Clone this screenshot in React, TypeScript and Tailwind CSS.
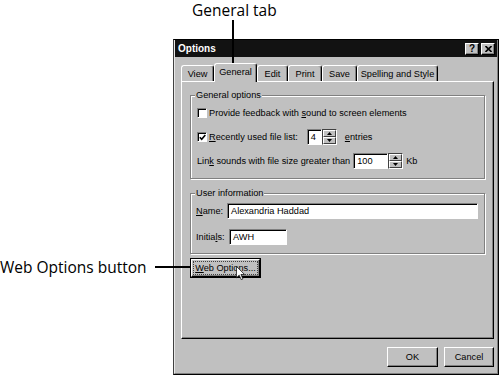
import React from "react";

const raised =
  "border border-t-white border-l-white border-r-black border-b-black shadow-[inset_-1px_-1px_0_#808080]";
const sunken =
  "border border-t-[#808080] border-l-[#808080] border-r-white border-b-white shadow-[inset_1px_1px_0_#000]";

function Check({ checked }: { checked?: boolean }) {
  return (
    <div className={`w-[10px] h-[10px] bg-white shrink-0 flex items-center justify-center ${sunken}`}>
      {checked && (
        <svg width="7" height="7" viewBox="0 0 7 7">
          <path d="M0.8 3.2 L2.7 5.2 L6.3 1" stroke="#000" strokeWidth="1.6" fill="none" />
        </svg>
      )}
    </div>
  );
}

function Spin() {
  const btn =
    "flex-1 flex items-center justify-center border border-t-white border-l-white border-r-[#404040] border-b-[#404040]";
  return (
    <div className="w-[15px] h-[16px] shrink-0 flex flex-col border border-t-[#404040] border-l-[#404040] border-r-white border-b-white bg-[#c0c0c0]">
      <div className={btn}>
        <svg width="5" height="3" viewBox="0 0 5 3">
          <path d="M2.5 0 L5 3 L0 3 Z" fill="#000" />
        </svg>
      </div>
      <div className={btn}>
        <svg width="5" height="3" viewBox="0 0 5 3">
          <path d="M0 0 L5 0 L2.5 3 Z" fill="#000" />
        </svg>
      </div>
    </div>
  );
}

function U({ children }: { children: React.ReactNode }) {
  return <span className="underline underline-offset-[1px]">{children}</span>;
}

const tabs = [
  { label: "View", w: 33 },
  { label: "General", w: 43, sel: true },
  { label: "Edit", w: 31 },
  { label: "Print", w: 34 },
  { label: "Save", w: 35 },
  { label: "Spelling and Style", w: 81 },
];

export default function App() {
  return (
    <div className="relative w-[500px] h-[375px] overflow-hidden bg-white flex flex-col text-black">
      <div className="h-[39px] shrink-0 pl-[192px] font-['Open_Sans',sans-serif] text-[15.5px] leading-[20px]">
        General tab
      </div>
      <div className="flex flex-1 min-h-0">
        <div className="w-[173px] shrink-0 pt-[218px] font-['Open_Sans',sans-serif] text-[15.5px] leading-[20px] whitespace-nowrap">
          Web Options button
        </div>
        <div className="w-[326px] h-full shrink-0 bg-[#c0c0c0] border border-black border-l-[#404040] flex flex-col font-['Liberation_Sans',sans-serif] text-[9.2px] leading-[12px]">
          <div className="flex-1 flex flex-col border-l border-r border-b border-l-[#e8e8e8] border-r-[#808080] border-b-[#808080]">
            {/* Title bar */}
            <div className="h-[17px] shrink-0 bg-[#121212] flex items-center pl-[3px] pr-[2px]">
              <span className="text-white font-bold text-[10px] leading-[12px]">Options</span>
              <div className="ml-auto flex gap-[2px]">
                <div className={`w-[14px] h-[12px] bg-[#c0c0c0] flex items-center justify-center font-bold text-[10px] leading-[10px] ${raised}`}>
                  ?
                </div>
                <div className={`w-[14px] h-[12px] bg-[#c0c0c0] flex items-center justify-center ${raised}`}>
                  <svg width="7" height="6" viewBox="0 0 7 6">
                    <path d="M0.5 0 L6.5 6 M6.5 0 L0.5 6" stroke="#000" strokeWidth="1.6" />
                  </svg>
                </div>
              </div>
            </div>

            <div className="flex-1 flex flex-col pl-[6px] pr-[3px] pt-[6px]">
              {/* Tabs */}
              <div className="h-[18px] shrink-0 flex items-end">
                {tabs.map((t) =>
                  t.sel ? (
                    <div
                      key={t.label}
                      style={{ width: t.w }}
                      className="relative z-10 h-[19px] -mb-[1px] bg-[#c0c0c0] border-t border-l border-r border-t-white border-l-white border-r-black rounded-t-[3px] shadow-[inset_-1px_0_0_#808080] flex justify-center pt-[2px] whitespace-nowrap"
                    >
                      {t.label}
                    </div>
                  ) : (
                    <div
                      key={t.label}
                      style={{ width: t.w }}
                      className="h-[16px] border-t border-l border-r border-t-white border-l-white border-r-black rounded-t-[3px] shadow-[inset_-1px_0_0_#808080] flex justify-center pt-[2px] whitespace-nowrap"
                    >
                      {t.label}
                    </div>
                  )
                )}
              </div>

              {/* Panel */}
              <div className="h-[258px] shrink-0 border border-t-white border-l-white border-r-black border-b-black shadow-[inset_-1px_-1px_0_#808080] px-[8px] flex flex-col">
                {/* General options */}
                <div className="relative mt-[13px] border border-[#808080] shadow-[inset_1px_1px_0_#fff,1px_1px_0_#fff] pl-[6px] pr-[6px] pt-[10px] pb-[9px] flex flex-col">
                  <span className="absolute -top-[7px] left-[4px] px-[1px] bg-[#c0c0c0] leading-[12px]">General options</span>
                  <div className="h-[14px] flex items-center gap-[2px]">
                    <Check />
                    <span>
                      Provide feedback with <U>s</U>ound to screen elements
                    </span>
                  </div>
                  <div className="h-[16px] mt-[9px] flex items-center">
                    <Check checked />
                    <span className="ml-[2px]">
                      <U>R</U>ecently used file list:
                    </span>
                    <div className={`ml-[9px] w-[15px] h-[16px] bg-white flex items-center pl-[3px] ${sunken}`}>4</div>
                    <Spin />
                    <span className="ml-[8px]">
                      <U>e</U>ntries
                    </span>
                  </div>
                  <div className="h-[16px] mt-[8px] flex items-center">
                    <span>
                      Lin<U>k</U> sounds with file size greater than
                    </span>
                    <div className={`ml-[3px] w-[35px] h-[16px] bg-white flex items-center pl-[3px] ${sunken}`}>100</div>
                    <Spin />
                    <span className="ml-[3px]">Kb</span>
                  </div>
                </div>

                {/* User information */}
                <div className="relative mt-[14px] border border-[#808080] shadow-[inset_1px_1px_0_#fff,1px_1px_0_#fff] pl-[5px] pr-[6px] pt-[9px] pb-[8px] flex flex-col">
                  <span className="absolute -top-[7px] left-[4px] px-[1px] bg-[#c0c0c0] leading-[12px]">User information</span>
                  <div className="h-[16px] flex items-center">
                    <span className="w-[31px] shrink-0">
                      <U>N</U>ame:
                    </span>
                    <div className={`flex-1 h-[16px] bg-white flex items-center pl-[3px] ${sunken}`}>Alexandria Haddad</div>
                  </div>
                  <div className="h-[16px] mt-[10px] flex items-center">
                    <span className="w-[33px] shrink-0">
                      Initia<U>l</U>s:
                    </span>
                    <div className={`w-[58px] h-[16px] bg-white flex items-center pl-[3px] ${sunken}`}>AWH</div>
                  </div>
                </div>

                {/* Web options button */}
                <div className="mt-[4px] w-[71px] h-[20px] border border-black">
                  <div className={`w-full h-full flex items-center justify-center ${raised}`}>
                    <span className="outline outline-1 outline-dotted outline-[#404040] px-[1px]">
                      <U>W</U>eb Options...
                    </span>
                  </div>
                </div>
              </div>

              {/* Bottom buttons */}
              <div className="mt-[8px] flex justify-end gap-[6px]">
                <div className={`w-[51px] h-[20px] flex items-center justify-center ${raised}`}>OK</div>
                <div className={`w-[50px] h-[20px] flex items-center justify-center ${raised}`}>Cancel</div>
              </div>
            </div>
          </div>
        </div>
      </div>

      {/* Leader lines */}
      <div className="absolute left-[232px] top-[20px] w-[2px] h-[55px] bg-black" />
      <div className="absolute left-[155px] top-[266px] w-[35px] h-[2px] bg-black" />

      {/* Mouse cursor */}
      <svg className="absolute left-[236px] top-[266px]" width="9" height="14" viewBox="0 0 12 19">
        <path d="M0.5 0.5 L0.5 16 L4.2 12.4 L7 18.5 L9.3 17.5 L6.6 11.5 L11.5 11.5 Z" fill="#fff" stroke="#000" strokeWidth="1" />
      </svg>
    </div>
  );
}
